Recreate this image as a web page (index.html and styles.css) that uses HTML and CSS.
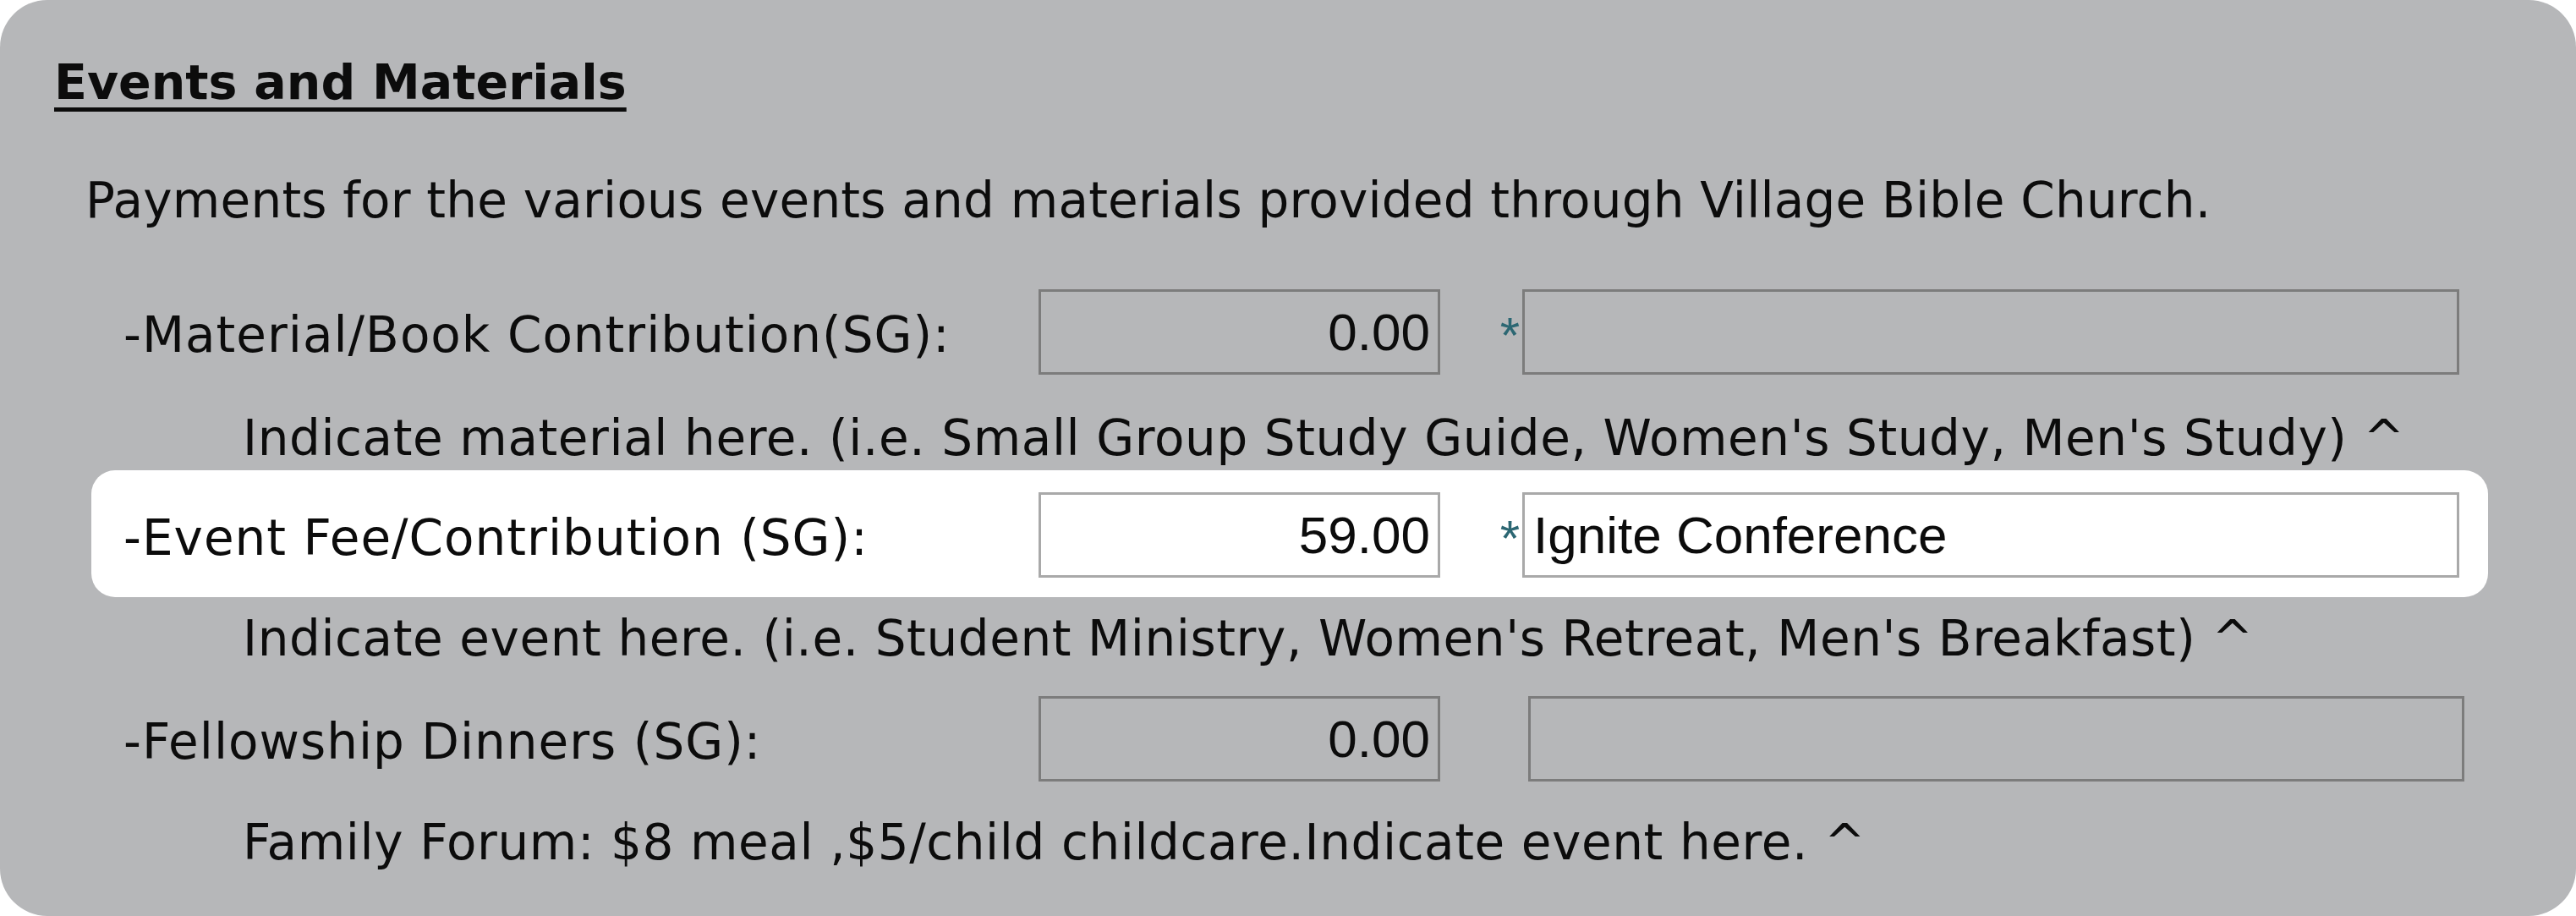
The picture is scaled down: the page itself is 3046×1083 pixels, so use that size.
FILE: index.html
```html
<!DOCTYPE html>
<html lang="en">
<head>
<meta charset="utf-8">
<title>Events and Materials</title>
<link rel="stylesheet" href="styles.css">
</head>
<body>
<div class="panel">
  <h2 class="title">Events and Materials</h2>
  <p class="intro">Payments for the various events and materials provided through Village Bible Church.</p>

  <div class="field">
    <span class="label">-Material/Book Contribution(SG):</span>
    <input class="amount" type="text" value="0.00">
    <span class="marker">*</span>
    <input class="desc" type="text" value="">
  </div>
  <p class="note">Indicate material here. (i.e. Small Group Study Guide, Women's Study, Men's Study) ^</p>

  <div class="field field--active">
    <span class="label">-Event Fee/Contribution (SG):</span>
    <input class="amount" type="text" value="59.00">
    <span class="marker">*</span>
    <input class="desc" type="text" value="Ignite Conference">
  </div>
  <p class="note note--after-active">Indicate event here. (i.e. Student Ministry, Women's Retreat, Men's Breakfast) ^</p>

  <div class="field field--last">
    <span class="label">-Fellowship Dinners (SG):</span>
    <input class="amount" type="text" value="0.00">
    <span class="marker marker--empty"></span>
    <input class="desc" type="text" value="">
  </div>
  <p class="note note--last">Family Forum: $8 meal ,$5/child childcare.Indicate event here. ^</p>
</div>
</body>
</html>
```
FILE: styles.css
```css
html, body {
  margin: 0;
  padding: 0;
  background: #ffffff;
}

.panel {
  box-sizing: border-box;
  width: 3046px;
  height: 1083px;
  background: #b6b7b9;
  border-radius: 56px;
  padding: 64px 0 0 64px;
  font-family: "DejaVu Sans", Verdana, sans-serif;
  font-size: 58px;
  line-height: 66px;
  color: #0c0c0c;
  overflow: hidden;
}

.title {
  margin: 0;
  font-size: 57px;
  line-height: 66px;
  font-weight: bold;
  text-decoration: underline;
  text-decoration-thickness: 5px;
  text-underline-offset: 10px;
}

.intro {
  margin: 74px 0 0 37px;
  letter-spacing: 0.2px;
}

.field {
  display: flex;
  align-items: flex-start;
  height: 101px;
  margin-top: 72px;
  padding-left: 82px;
}

.field--active {
  box-sizing: content-box;
  width: 2796px;
  margin: 5px 0 0 44px;
  padding: 26px 0 23px 38px;
  background: #ffffff;
  border-radius: 28px;
}

.field--last {
  margin-top: 35px;
}

.label {
  width: 1082px;
  flex: none;
  margin-top: 21px;
  white-space: nowrap;
  letter-spacing: 1px;
}

.amount,
.desc {
  box-sizing: border-box;
  height: 101px;
  margin: 0;
  border: 3px solid #7c7c7c;
  background: transparent;
  font-family: "Liberation Sans", Arial, sans-serif;
  font-size: 62px;
  color: #0c0c0c;
  outline: none;
  flex: none;
}

.amount {
  width: 475px;
  padding: 0 9px 0 8px;
  text-align: right;
}

.desc {
  width: 1108px;
  padding: 0 8px 0 10px;
}

.field--active .amount,
.field--active .desc {
  background: #ffffff;
  border-color: #a9a9a9;
}

.marker {
  box-sizing: border-box;
  width: 97px;
  flex: none;
  padding: 22px 3px 0 0;
  text-align: right;
  font-family: "Liberation Sans", Arial, sans-serif;
  font-size: 60px;
  line-height: 66px;
  color: #2c6773;
}

.marker--empty {
  width: 104px;
}

.field--last .desc {
  width: 1107px;
}

.note {
  margin: 42px 0 0 223px;
  white-space: nowrap;
  letter-spacing: 0.58px;
}

.field--active + .note {
  margin-top: 16px;
}

.note--last {
  margin-top: 39px;
}
```
